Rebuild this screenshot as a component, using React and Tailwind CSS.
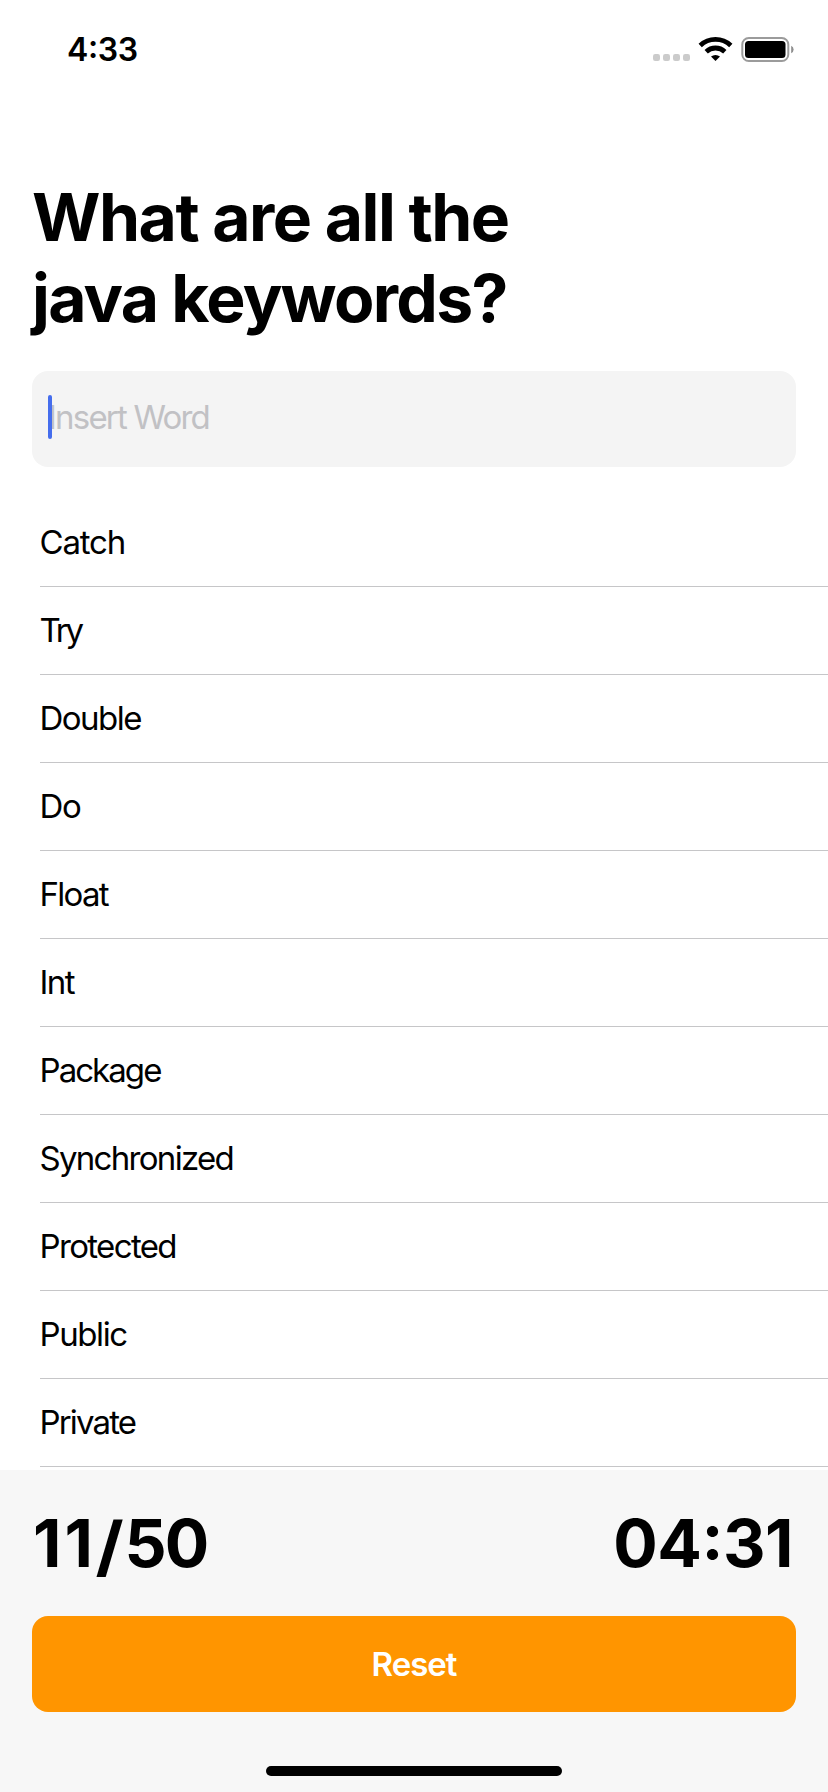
const words = [
  { text: "Catch", spacing: "tracking-[-1.2px]" },
  { text: "Try", spacing: "tracking-[-3.2px]" },
  { text: "Double", spacing: "tracking-[-1.5px]" },
  { text: "Do", spacing: "tracking-[-1.3px]" },
  { text: "Float", spacing: "tracking-[-1.7px]" },
  { text: "Int", spacing: "tracking-[-1.5px]" },
  { text: "Package", spacing: "tracking-[-1.95px]" },
  { text: "Synchronized", spacing: "tracking-[-1.7px]" },
  { text: "Protected", spacing: "tracking-[-1.65px]" },
  { text: "Public", spacing: "tracking-[-1.4px]" },
  { text: "Private", spacing: "tracking-[-1.85px]" },
];

function StatusBar() {
  return (
    <div className="flex h-[100px] shrink-0 items-start justify-between pl-[67px] pr-[33px]">
      <span className="mt-[30px] text-[32px] leading-[40px] font-semibold tracking-[-0.4px] [font-feature-settings:'calt'_1]">4:33</span>
      <svg className="mt-[34px]" width="142" height="30" viewBox="0 0 142 30">
        <g fill="#cbcbcb">
          <rect x="0" y="20" width="7" height="7" rx="2.2" />
          <rect x="10" y="20" width="7" height="7" rx="2.2" />
          <rect x="20" y="20" width="7" height="7" rx="2.2" />
          <rect x="30" y="20" width="7" height="7" rx="2.2" />
        </g>
        <g fill="none" stroke="#000" strokeWidth="4.8">
          <path d="M47.2 11.4a22.2 22.2 0 0 1 30.6 0" />
          <path d="M53.2 17.7a13.6 13.6 0 0 1 18.6 0" />
        </g>
        <path d="M58 22.6a6.8 6.8 0 0 1 9 0l-4.5 4.4z" />
        <rect x="89.3" y="4" width="46" height="23" rx="6.5" fill="none" stroke="#9b9b9b" strokeWidth="2" />
        <rect x="92" y="7" width="40.5" height="17" rx="3.5" />
        <path d="M138.2 11.7a4.2 4.2 0 0 1 0 7.6z" fill="#8e8e8e" />
      </svg>
    </div>
  );
}

export default function App() {
  return (
    <div className="flex h-[1792px] w-[828px] flex-col overflow-hidden bg-white font-['Inter',sans-serif] text-black">
      <StatusBar />
      <h1 className="mt-[77px] ml-8 h-[162px] shrink-0 text-[66px] leading-[81px] font-bold">
        <span className="block tracking-[-1.5px]">What are all the</span>
        <span className="block tracking-[-1.75px]">java keywords?</span>
      </h1>
      <div className="mx-8 mt-8 flex h-24 shrink-0 items-center rounded-2xl bg-[#f4f4f4] pb-1 pl-4">
        <span className="z-10 h-11 w-1 rounded-full bg-[#456ded]" />
        <span className="-ml-1 pt-0.5 text-[33px] tracking-[-1.8px] text-[#c1c1c4]">Insert Word</span>
      </div>
      <ul className="mt-8 min-h-0 flex-1 overflow-hidden pl-10">
        {words.map(({ text, spacing }) => (
          <li key={text} className="flex h-[88px] items-center border-b border-[#c6c6c8] text-[33px]">
            <span className="-ml-[0.5px]"><span className={spacing}>{text}</span></span>
          </li>
        ))}
      </ul>
      <footer className="flex h-[322px] shrink-0 flex-col bg-[#f7f7f7] px-8">
        <div className="mt-8 flex h-[82px] items-center justify-between text-[66px] font-bold">
          <span className="pl-px [font-kerning:none]">
            <span className="tracking-[3px]">11</span>
            <span className="ml-px inline-block translate-y-[3px] scale-x-110 tracking-[2px]">/</span>
            <span className="tracking-[-2px]">50</span>
          </span>
          <span className="pr-[3px] tracking-[-0.5px] [font-feature-settings:'calt'_1]">04:31</span>
        </div>
        <button className="mt-8 h-24 shrink-0 rounded-2xl bg-[#ff9500] pt-0.5 text-[33px] font-semibold tracking-[-1px] text-white">Reset</button>
        <div className="mt-[54px] h-[10px] w-[296px] shrink-0 self-center rounded-full bg-black" />
      </footer>
    </div>
  );
}
